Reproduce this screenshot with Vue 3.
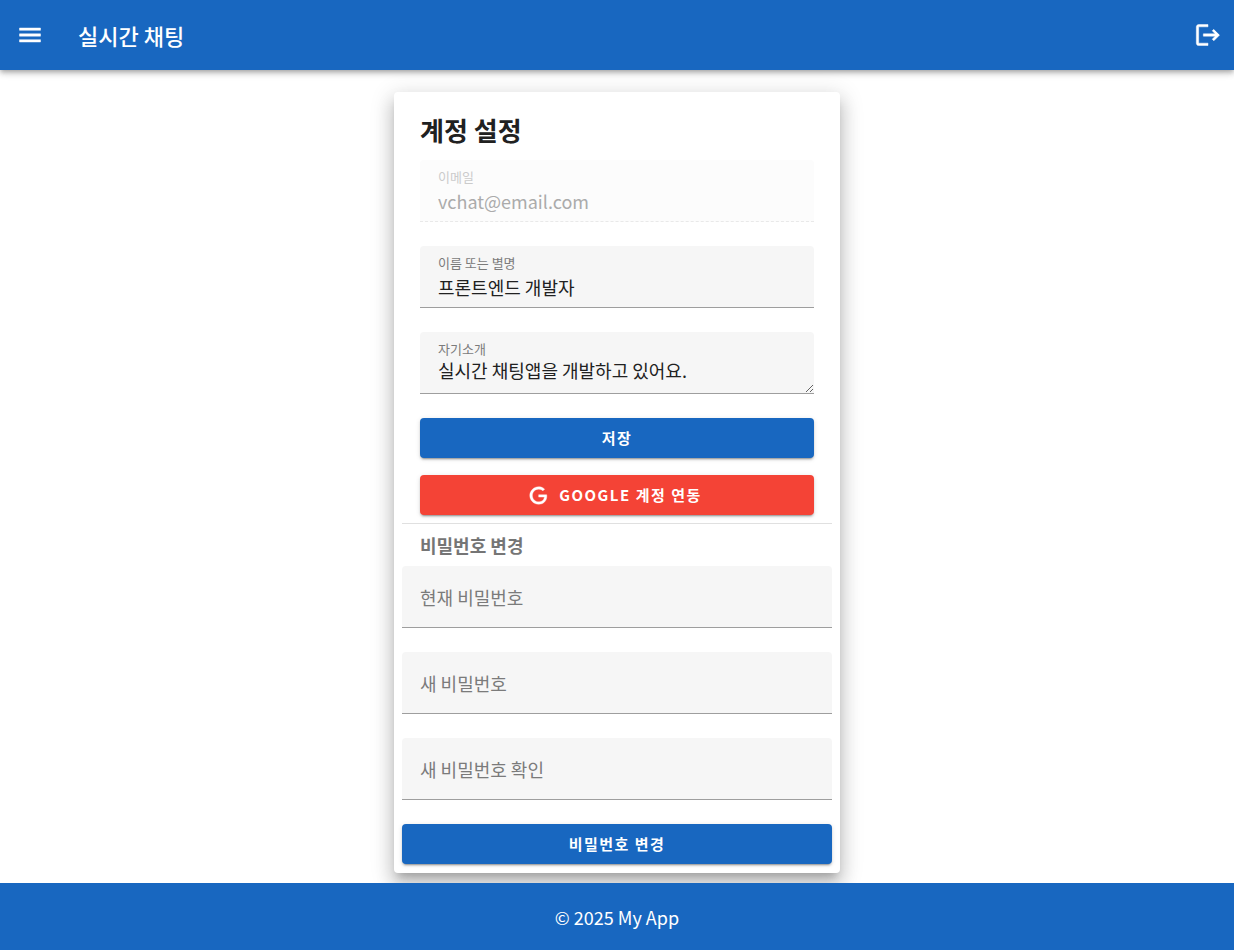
<template>
    <div class="app">
        <header class="app-bar">
            <button type="button" class="icon-btn" aria-label="메뉴">
                <svg viewBox="0 0 24 24" width="28" height="28">
                    <path d="M3,6H21V8H3V6M3,11H21V13H3V11M3,16H21V18H3V16Z" />
                </svg>
            </button>
            <div class="app-title">실시간 채팅</div>
            <button type="button" class="icon-btn" aria-label="로그아웃">
                <svg viewBox="0 0 24 24" width="28" height="28">
                    <path d="M17 7L15.59 8.41L18.17 11H8V13H18.17L15.59 15.58L17 17L22 12M4 5H12V3H4C2.9 3 2 3.9 2 5V19C2 20.1 2.9 21 4 21H12V19H4V5Z" />
                </svg>
            </button>
        </header>

        <main class="content">
            <section class="card">
                <form class="profile" @submit.prevent>
                    <h1>계정 설정</h1>
                    <div class="field filled disabled">
                        <label for="email">이메일</label>
                        <input id="email" v-model="profile.email" type="email" disabled />
                    </div>
                    <div class="field filled">
                        <label for="name">이름 또는 별명</label>
                        <input id="name" v-model="profile.name" type="text" />
                    </div>
                    <div class="field filled">
                        <label for="bio">자기소개</label>
                        <textarea id="bio" v-model="profile.bio" rows="1"></textarea>
                    </div>
                    <button type="submit" class="btn primary">저장</button>
                    <button type="button" class="btn google">
                        <svg viewBox="0 0 24 24" width="21" height="21">
                            <path d="M21.35,11.1H12.18V13.83H18.69C18.36,17.64 15.19,19.27 12.19,19.27C8.36,19.27 5,16.25 5,12C5,7.9 8.2,4.73 12.2,4.73C15.29,4.73 17.1,6.7 17.1,6.7L19,4.72C19,4.72 16.56,2 12.1,2C6.42,2 2.03,6.8 2.03,12C2.03,17.05 6.16,22 12.25,22C17.6,22 21.5,18.33 21.5,12.91C21.5,11.76 21.35,11.1 21.35,11.1Z" />
                        </svg>
                        GOOGLE 계정 연동
                    </button>
                </form>

                <hr />

                <form class="password" @submit.prevent>
                    <h2>비밀번호 변경</h2>
                    <div
                        v-for="item in passwordFields"
                        :key="item.id"
                        class="field"
                        :class="{ filled: passwords[item.id] }"
                    >
                        <label :for="item.id">{{ item.label }}</label>
                        <input :id="item.id" v-model="passwords[item.id]" type="password" />
                    </div>
                    <button type="submit" class="btn primary">비밀번호 변경</button>
                </form>
            </section>
        </main>

        <footer class="footer">© 2025 My App</footer>
    </div>
</template>

<script setup>
import { reactive } from 'vue';

const profile = reactive({
    email: 'vchat@email.com',
    name: '프론트엔드 개발자',
    bio: '실시간 채팅앱을 개발하고 있어요.',
});

const passwords = reactive({ current: '', next: '', confirm: '' });

const passwordFields = [
    { id: 'current', label: '현재 비밀번호' },
    { id: 'next', label: '새 비밀번호' },
    { id: 'confirm', label: '새 비밀번호 확인' },
];
</script>

<style>
body {
    margin: 0;
    background: #fff;
}
</style>

<style scoped>
.app {
    display: flex;
    flex-direction: column;
    min-height: 100vh;
    font-family: 'Noto Sans CJK KR', sans-serif;
    font-size: 18px;
    line-height: 26px;
    color: #212121;
}

.app * {
    box-sizing: border-box;
}

.app-bar {
    display: flex;
    align-items: center;
    height: 70px;
    padding: 0 0 0 4px;
    background: #1867c0;
    color: #fff;
    box-shadow: 0 2px 4px -1px rgba(0, 0, 0, 0.2), 0 4px 5px 0 rgba(0, 0, 0, 0.14), 0 1px 10px 0 rgba(0, 0, 0, 0.12);
}

.icon-btn {
    display: flex;
    align-items: center;
    justify-content: center;
    width: 52px;
    height: 52px;
    padding: 0;
    border: none;
    border-radius: 50%;
    background: none;
    color: inherit;
}

svg {
    fill: currentColor;
    stroke: currentColor;
    stroke-width: 0.4;
}

.app-title {
    flex: 1;
    padding-left: 22px;
    font-size: 22px;
    font-weight: 500;
    line-height: 32px;
}

.content {
    flex: 1;
    display: flex;
    justify-content: center;
    align-items: flex-start;
    padding: 22px 8px 10px;
}

.card {
    width: 100%;
    max-width: 446px;
    padding: 8px 8px 9px;
    border-radius: 4px;
    background: #fff;
    box-shadow: 0 7px 8px -4px rgba(0, 0, 0, 0.2), 0 12px 17px 2px rgba(0, 0, 0, 0.14), 0 5px 22px 4px rgba(0, 0, 0, 0.12);
}

.profile {
    padding: 0 18px 8px;
}

h1 {
    margin: 0;
    padding: 10px 0;
    font-size: 26px;
    font-weight: 700;
    line-height: 40px;
}

h2 {
    margin: 0;
    padding: 8px 18px;
    font-size: 18px;
    font-weight: 700;
    line-height: 26px;
    color: #757575;
}

hr {
    margin: 0;
    border: none;
    border-top: 1px solid #e0e0e0;
}

/* 라벨과 입력창을 같은 칸에 겹쳐 배치 */
.field {
    display: grid;
    min-height: 62px;
    margin-bottom: 24px;
    border-bottom: 1px solid #9e9e9e;
    border-radius: 4px 4px 0 0;
    background: #f6f6f6;
}

.field label,
.field input,
.field textarea {
    grid-area: 1 / 1;
}

.field label {
    align-self: center;
    padding: 0 18px;
    color: #7b7b7b;
    pointer-events: none;
    z-index: 1;
}

.field.filled label {
    align-self: start;
    padding-top: 7px;
    font-size: 13px;
    line-height: 20px;
}

.field input,
.field textarea {
    display: block;
    width: 100%;
    min-width: 0;
    margin: 0;
    padding: 24px 18px 4px;
    border: none;
    outline: none;
    background: none;
    font: inherit;
    color: inherit;
}

.field textarea {
    height: 61px;
    padding-top: 25px;
    resize: vertical;
}

.field.disabled {
    border-bottom: 1px dashed #e9e9e9;
    background: #fcfcfc;
}

.field.disabled label {
    color: #cbcbcb;
}

.field.disabled input {
    color: #ababab;
}

.btn {
    display: flex;
    align-items: center;
    justify-content: center;
    gap: 10px;
    width: 100%;
    height: 40px;
    padding: 0 18px;
    border: none;
    border-radius: 4px;
    font-family: inherit;
    font-size: 15px;
    font-weight: 700;
    line-height: 22px;
    letter-spacing: 0.1em;
    color: #fff;
    box-shadow: 0 3px 1px -2px rgba(0, 0, 0, 0.2), 0 2px 2px 0 rgba(0, 0, 0, 0.14), 0 1px 5px 0 rgba(0, 0, 0, 0.12);
}

.btn svg {
    margin-left: -4px;
}

.primary {
    background: #1867c0;
}

.google {
    margin-top: 17px;
    background: #f44336;
}

.footer {
    position: relative;
    display: flex;
    align-items: center;
    justify-content: center;
    min-height: 67px;
    padding: 8px 18px;
    background: #1867c0;
    color: #fff;
}
</style>
